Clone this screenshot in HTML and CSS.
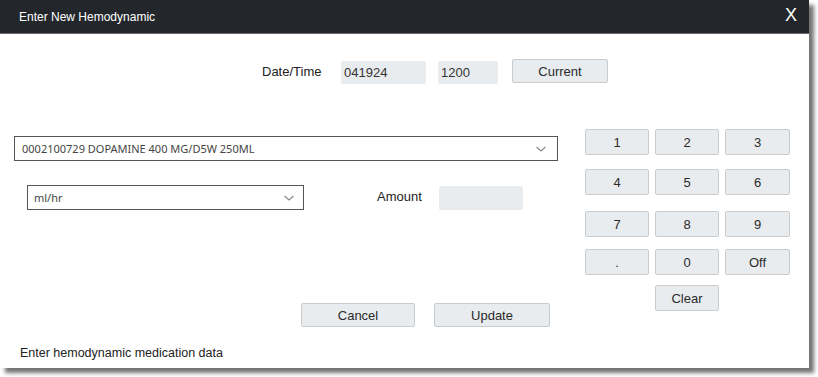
FILE: index.html
```html
<!DOCTYPE html>
<html lang="en">
<head>
<meta charset="UTF-8" />
<title>Enter New Hemodynamic</title>
<link rel="stylesheet" href="styles.css">
</head>
<body>

<div class="dialog">
  <div class="dialog-header">
    <span class="dialog-title">Enter New Hemodynamic</span>
    <span class="dialog-close">X</span>
  </div>

  <div class="datetime-row">
    <span class="label">Date/Time</span>
    <div class="field date-field">041924</div>
    <div class="field time-field">1200</div>
    <button class="btn current-btn">Current</button>
  </div>

  <div class="main">
    <div class="left-col">
      <div class="select med-select">
        <span>0002100729 DOPAMINE 400 MG/D5W 250ML</span>
        <svg width="12" height="8" viewBox="0 0 12 8"><polyline points="1.5,2 6,6 10.5,2" fill="none" stroke="#888" stroke-width="1.1"/></svg>
      </div>

      <div class="unit-row">
        <div class="select unit-select">
          <span>ml/hr</span>
          <svg width="12" height="8" viewBox="0 0 12 8"><polyline points="1.5,2 6,6 10.5,2" fill="none" stroke="#888" stroke-width="1.1"/></svg>
        </div>
        <span class="label amount-label">Amount</span>
        <div class="field amount-field"></div>
      </div>

      <div class="action-row">
        <button class="btn cancel-btn">Cancel</button>
        <button class="btn update-btn">Update</button>
      </div>
    </div>

    <!-- keypad -->
    <div class="keypad">
      <button class="btn key">1</button>
      <button class="btn key">2</button>
      <button class="btn key">3</button>
      <button class="btn key">4</button>
      <button class="btn key">5</button>
      <button class="btn key">6</button>
      <button class="btn key">7</button>
      <button class="btn key">8</button>
      <button class="btn key">9</button>
      <button class="btn key">.</button>
      <button class="btn key">0</button>
      <button class="btn key">Off</button>
      <button class="btn key clear-key">Clear</button>
    </div>
  </div>

  <div class="status">Enter hemodynamic medication data</div>
</div>

</body>
</html>
```

FILE: styles.css
```css
body {
  margin: 0;
  padding-bottom: 9px;
  background: #fff;
  font-family: "Liberation Sans", Arial, sans-serif;
  color: #222;
}
.dialog {
  width: 809px;
  height: 368px;
  background: #fff;
  box-shadow: 5px 5px 4px rgba(0,0,0,0.55);
  position: relative;
  overflow: hidden;
}
.dialog-header {
  height: 33px;
  background: #23272b;
  border-bottom: 1px solid #6a6d70;
  display: flex;
  align-items: center;
  justify-content: space-between;
  padding: 0 12px 0 19px;
  color: #fff;
}
.dialog-title {
  font-size: 12px;
}
.dialog-close {
  font-size: 18px;
  margin-top: -2px;
}
.label {
  font-size: 13px;
  color: #222;
}
.field {
  height: 23px;
  background: #e9ecef;
  border-radius: 2px;
  font-size: 13px;
  color: #333;
  line-height: 23px;
  padding-left: 3px;
  box-sizing: border-box;
}
.btn {
  background: #e9ecef;
  border: 1px solid #c9cbcd;
  border-radius: 2px;
  font-family: "Liberation Sans", Arial, sans-serif;
  font-size: 13px;
  color: #2a2a2a;
  padding: 0;
  box-sizing: border-box;
}
.datetime-row {
  display: flex;
  align-items: flex-start;
  margin-top: 25px;
  padding-left: 262px;
}
.datetime-row .label {
  margin-top: 5px;
  width: 79px;
}
.date-field {
  width: 85px;
  margin-top: 2px;
}
.time-field {
  width: 60px;
  margin-left: 12px;
  margin-top: 2px;
}
.current-btn {
  width: 96px;
  height: 24px;
  margin-left: 14px;
}
.main {
  display: flex;
  margin-top: 45px;
}
.left-col {
  width: 544px;
  padding-left: 14px;
  padding-top: 7px;
}
.select {
  height: 25px;
  border: 1px solid #555;
  box-sizing: border-box;
  display: flex;
  align-items: center;
  justify-content: space-between;
  padding: 0 10px 0 7px;
  font-family: "Noto Sans", sans-serif;
  font-size: 11px;
  color: #444;
}
.select svg {
  display: block;
}
.unit-row {
  display: flex;
  align-items: center;
  margin-top: 24px;
  padding-left: 13px;
}
.unit-select {
  width: 277px;
  padding-left: 6px;
  padding-right: 8px;
}
.amount-label {
  margin-left: 73px;
  margin-top: -2px;
  width: 62px;
}
.amount-field {
  width: 84px;
  height: 24px;
}
.action-row {
  display: flex;
  margin-top: 93px;
  padding-left: 287px;
  gap: 19px;
}
.cancel-btn {
  width: 114px;
  height: 24px;
}
.update-btn {
  width: 116px;
  height: 24px;
}
.keypad {
  margin-left: 27px;
  display: grid;
  grid-template-columns: 64px 64px 65px;
  grid-template-rows: 40px 42px 38px 36px 26px;
  column-gap: 6px;
  align-items: start;
}
.key {
  height: 26px;
  font-size: 13px;
}
.clear-key {
  grid-column: 2;
}
.status {
  position: absolute;
  left: 20px;
  top: 346px;
  font-size: 12.5px;
  color: #222;
}
```
